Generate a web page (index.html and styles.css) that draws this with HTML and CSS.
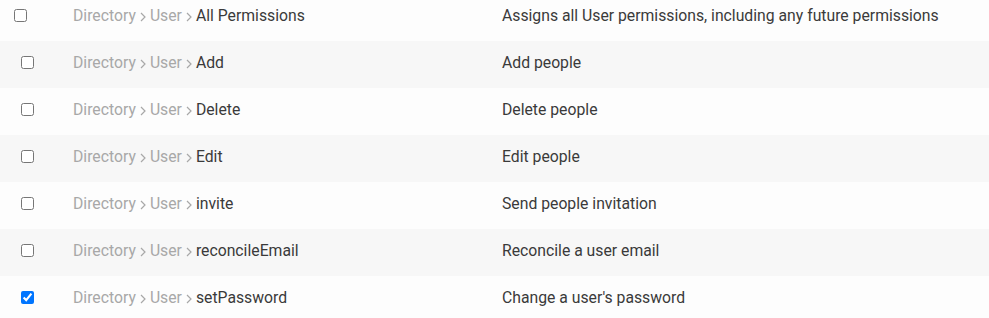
FILE: index.html
```html
<!DOCTYPE html>
<html lang="en">
<head>
    <meta charset="UTF-8">
    <title>Permissions</title>
    <link rel="stylesheet" href="styles.css">
</head>
<body>
    <svg width="0" height="0" class="defs">
        <symbol id="chev" viewBox="0 0 6 10"><path d="M1 1l4 4-4 4" fill="none" stroke="currentColor" stroke-width="1.2"/></symbol>
    </svg>
    <div class="perm-list">
        <div class="perm-row top">
            <div class="check"><input type="checkbox"></div>
            <div class="name"><span class="crumb">Directory<svg class="sep"><use href="#chev"/></svg>User<svg class="sep"><use href="#chev"/></svg></span>All Permissions</div>
            <div class="desc">Assigns all User permissions, including any future permissions</div>
        </div>
        <div class="perm-row">
            <div class="check"><input type="checkbox"></div>
            <div class="name"><span class="crumb">Directory<svg class="sep"><use href="#chev"/></svg>User<svg class="sep"><use href="#chev"/></svg></span>Add</div>
            <div class="desc">Add people</div>
        </div>
        <div class="perm-row">
            <div class="check"><input type="checkbox"></div>
            <div class="name"><span class="crumb">Directory<svg class="sep"><use href="#chev"/></svg>User<svg class="sep"><use href="#chev"/></svg></span>Delete</div>
            <div class="desc">Delete people</div>
        </div>
        <div class="perm-row">
            <div class="check"><input type="checkbox"></div>
            <div class="name"><span class="crumb">Directory<svg class="sep"><use href="#chev"/></svg>User<svg class="sep"><use href="#chev"/></svg></span>Edit</div>
            <div class="desc">Edit people</div>
        </div>
        <div class="perm-row">
            <div class="check"><input type="checkbox"></div>
            <div class="name"><span class="crumb">Directory<svg class="sep"><use href="#chev"/></svg>User<svg class="sep"><use href="#chev"/></svg></span>invite</div>
            <div class="desc">Send people invitation</div>
        </div>
        <div class="perm-row">
            <div class="check"><input type="checkbox"></div>
            <div class="name"><span class="crumb">Directory<svg class="sep"><use href="#chev"/></svg>User<svg class="sep"><use href="#chev"/></svg></span>reconcileEmail</div>
            <div class="desc">Reconcile a user email</div>
        </div>
        <div class="perm-row">
            <div class="check"><input type="checkbox" checked></div>
            <div class="name"><span class="crumb">Directory<svg class="sep"><use href="#chev"/></svg>User<svg class="sep"><use href="#chev"/></svg></span>setPassword</div>
            <div class="desc">Change a user's password</div>
        </div>
    </div>
</body>
</html>
```

FILE: styles.css
```css
body {
    margin: 0;
    background: #fdfdfd;
    font-family: Roboto, "Liberation Sans", sans-serif;
    font-size: 15.75px;
    color: #3a3a3a;
}
.defs {
    position: absolute;
}
.perm-list {
    margin-top: -6px;
}
.perm-row {
    display: grid;
    grid-template-columns: 73px 429px 1fr;
    align-items: center;
    height: 47px;
    padding-bottom: 5px;
    box-sizing: border-box;
    background: #fdfdfd;
}
.perm-row:nth-child(even) {
    background: #f7f7f7;
}
.check {
    padding-left: 17px;
    display: flex;
    align-items: center;
}
.perm-row.top .check {
    padding-left: 10px;
}
.check input {
    margin: 0 0 0 4px;
    width: 13px;
    height: 13px;
}
.crumb {
    color: #a8a8a8;
}
.sep {
    width: 6px;
    height: 10px;
    margin: 0 4px 0 4px;
    vertical-align: -1px;
}
```
